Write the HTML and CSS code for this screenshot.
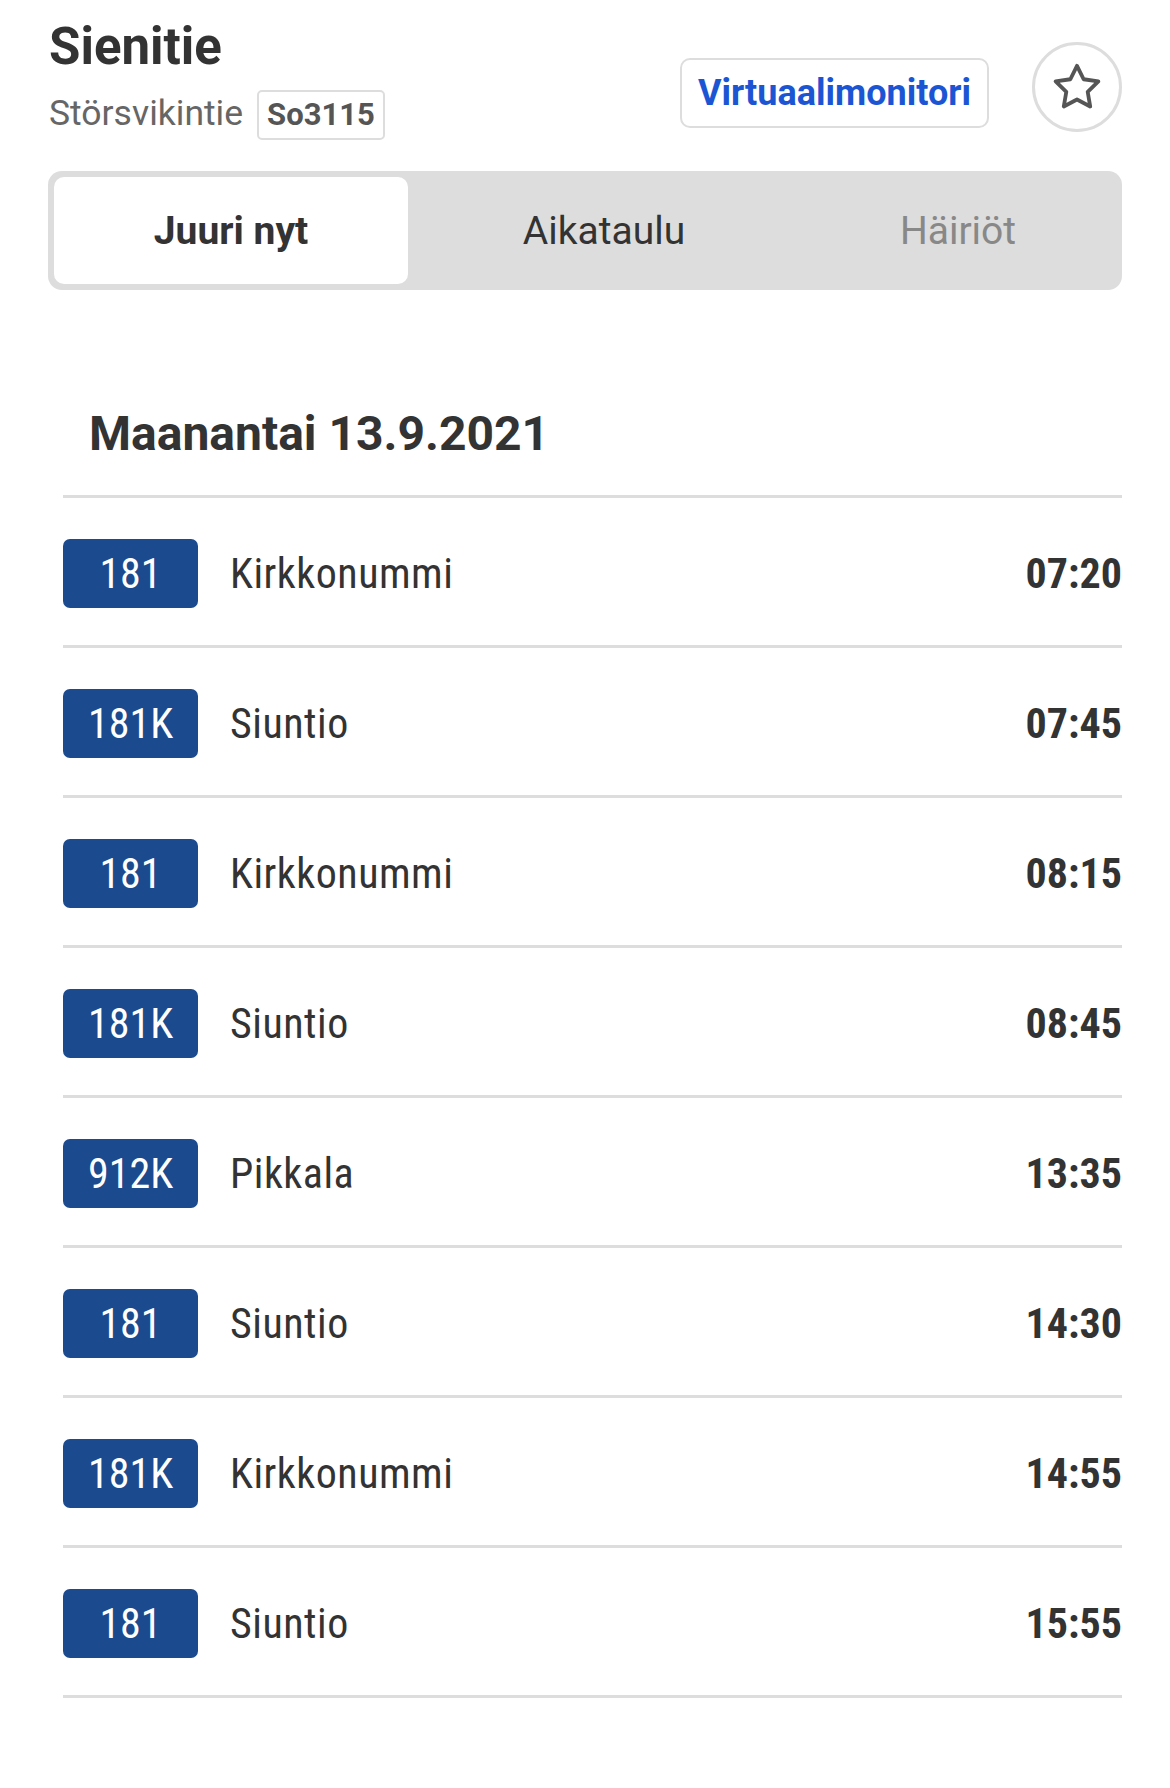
FILE: index.html
```html
<!DOCTYPE html>
<html lang="fi">
<head>
<meta charset="utf-8">
<title>Sienitie</title>
<link rel="stylesheet" href="styles.css">
</head>
<body>
<div class="page">
  <header class="header">
    <div class="stop">
      <h1 class="stop-name">Sienitie</h1>
      <div class="stop-sub">
        <span class="stop-street">Störsvikintie</span>
        <span class="stop-code">So3115</span>
      </div>
    </div>
    <div class="actions">
      <button class="monitor-btn">Virtuaalimonitori</button>
      <button class="fav-btn" aria-label="Suosikki">
        <svg class="star" viewBox="0 0 24 24" width="54" height="54"><polygon points="12 2.6 14.95 8.55 21.5 9.5 16.75 14.13 17.87 20.65 12 17.57 6.13 20.65 7.25 14.13 2.5 9.5 9.05 8.55" fill="none" stroke="#555" stroke-width="1.7" stroke-linejoin="round"/></svg>
      </button>
    </div>
  </header>

  <nav class="tabs">
    <div class="tab tab-active">Juuri nyt</div>
    <div class="tab">Aikataulu</div>
    <div class="tab tab-muted">Häiriöt</div>
  </nav>

  <section class="day">
    <h2 class="day-title">Maanantai 13.9.2021</h2>
    <ul class="departures">
      <li class="dep"><span class="route">181</span><span class="dest">Kirkkonummi</span><span class="time">07:20</span></li>
      <li class="dep"><span class="route">181K</span><span class="dest">Siuntio</span><span class="time">07:45</span></li>
      <li class="dep"><span class="route">181</span><span class="dest">Kirkkonummi</span><span class="time">08:15</span></li>
      <li class="dep"><span class="route">181K</span><span class="dest">Siuntio</span><span class="time">08:45</span></li>
      <li class="dep"><span class="route">912K</span><span class="dest">Pikkala</span><span class="time">13:35</span></li>
      <li class="dep"><span class="route">181</span><span class="dest">Siuntio</span><span class="time">14:30</span></li>
      <li class="dep"><span class="route">181K</span><span class="dest">Kirkkonummi</span><span class="time">14:55</span></li>
      <li class="dep"><span class="route">181</span><span class="dest">Siuntio</span><span class="time">15:55</span></li>
    </ul>
  </section>
</div>
</body>
</html>
```

FILE: styles.css
```css
* { box-sizing: border-box; }
html, body { margin: 0; padding: 0; background: #fff; }
body { font-family: Roboto, "Noto Sans", "Liberation Sans", sans-serif; color: #333; }

.page { width: 1170px; }

.header {
  display: flex;
  justify-content: space-between;
  align-items: flex-start;
  padding: 20px 48px 0 49px;
}
.stop-name {
  margin: 0;
  font-size: 51px;
  line-height: 54px;
  font-weight: 700;
  color: #333;
}
.stop-sub {
  display: flex;
  align-items: baseline;
  gap: 14px;
  margin-top: 14px;
}
.stop-street {
  font-size: 35.5px;
  line-height: 50px;
  color: #666;
}
.stop-code {
  font-size: 31px;
  line-height: 40px;
  font-weight: 700;
  color: #555;
  border: 2px solid #ddd;
  border-radius: 5px;
  padding: 3px 8px;
}
.actions {
  display: flex;
  align-items: flex-start;
  gap: 43px;
}
.monitor-btn {
  margin-top: 38px;
  height: 70px;
  padding: 0 16px;
  border: 2px solid #ddd;
  border-radius: 10px;
  background: #fff;
  font-family: Roboto, "Noto Sans", sans-serif;
  font-size: 36px;
  font-weight: 700;
  color: #1c55d4;
}
.fav-btn {
  margin-top: 22px;
  width: 90px;
  height: 90px;
  border: 3px solid #ddd;
  border-radius: 50%;
  background: #fff;
  padding: 0;
  display: flex;
  align-items: center;
  justify-content: center;
}
.star { display: block; }

.tabs {
  margin: 31px 48px 0 48px;
  height: 119px;
  padding: 6px;
  background: #ddd;
  border-radius: 14px;
  display: grid;
  grid-template-columns: repeat(3, 1fr);
}
.tab {
  display: flex;
  align-items: center;
  justify-content: center;
  font-size: 39px;
  color: #333;
  padding-left: 38px;
}
.tab-active {
  background: #fff;
  border-radius: 10px;
  font-weight: 700;
  padding-left: 0;
}
.tab-muted { color: #888; }

.day { margin: 0 48px 0 63px; }
.day-title {
  margin: 0;
  padding: 116px 0 0 26px;
  height: 205px;
  font-size: 48px;
  line-height: 56px;
  font-weight: 700;
  color: #333;
}
.departures {
  list-style: none;
  margin: 0;
  padding: 0;
  border-top: 3px solid #ddd;
}
.dep {
  display: flex;
  align-items: center;
  height: 150px;
  border-bottom: 3px solid #ddd;
  padding-top: 3px;
  font-family: "Roboto Condensed", Roboto, sans-serif;
  font-stretch: condensed;
  font-size: 42px;
}
.route {
  width: 135px;
  height: 69px;
  border-radius: 7px;
  background: #1b4a8e;
  color: #fff;
  display: flex;
  align-items: center;
  justify-content: center;
}
.dest {
  flex: 1;
  margin-left: 32px;
  color: #333;
  letter-spacing: 0.5px;
}
.time {
  font-weight: 700;
  color: #333;
}
```
